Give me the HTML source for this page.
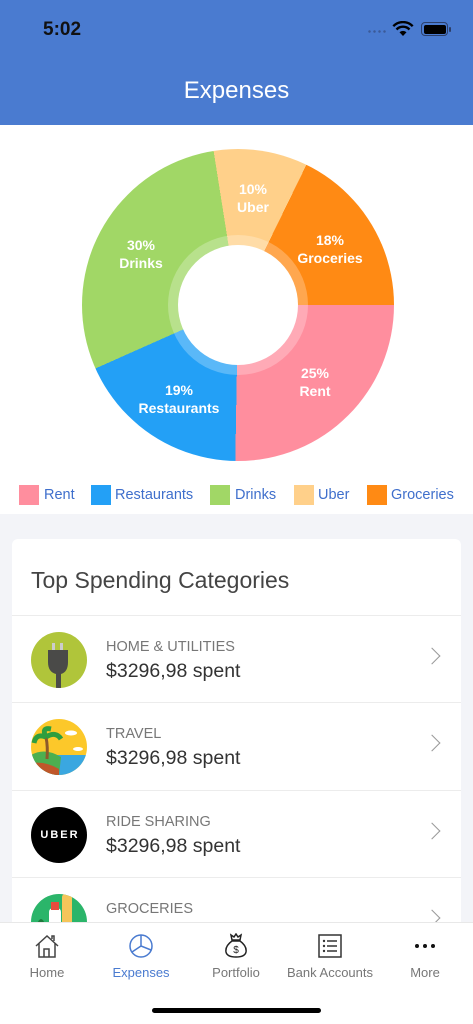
<!DOCTYPE html>
<html><head><meta charset="utf-8"><style>
*{margin:0;padding:0;box-sizing:border-box}
body{width:473px;height:1024px;overflow:hidden;background:#f3f4f8;font-family:"Liberation Sans",sans-serif;position:relative}
.hdr{position:absolute;left:0;top:0;width:473px;height:125px;background:#4a7bd0;box-shadow:0 1px 3px rgba(0,0,0,.2)}
.time{position:absolute;left:43px;top:19px;font-size:19px;font-weight:bold;color:#111}
.title{position:absolute;top:77px;width:100%;text-align:center;color:#fff;font-size:24px}
.chart{position:absolute;top:125px;left:0;width:473px;height:389px;background:#fff}
.pie{position:absolute;left:82px;top:24px;width:312px;height:312px;border-radius:50%;
background:conic-gradient(#ffd08a 0 26deg,#ff8a14 26deg 90deg,#ff8e9e 90deg 181deg,#23a0f6 181deg 246deg,#a1d766 246deg 351deg,#ffd08a 351deg 360deg)}
.ring{position:absolute;left:86px;top:86px;width:140px;height:140px;border-radius:50%;background:rgba(255,255,255,.25)}
.hole{position:absolute;left:96px;top:96px;width:120px;height:120px;border-radius:50%;background:#fff}
.lbl{position:absolute;color:#fff;font-size:14px;font-weight:bold;text-align:center;line-height:18px;transform:translateX(-50%);white-space:nowrap}
.legend{position:absolute;top:360px;left:0;width:100%;font-size:14.5px;color:#3f6fcc}
.legend span{position:absolute;top:0;line-height:20px}
.legend i{position:absolute;top:0;width:20px;height:20px}
.card{position:absolute;left:12px;top:539px;width:449px;height:400px;background:#fff;border-radius:6px}
.ct{position:absolute;left:19px;top:28px;font-size:23px;color:#444}
.row{position:absolute;left:0;width:449px;height:87px;border-top:1px solid #ececec}
.ic{position:absolute;left:19px;top:16px;width:56px;height:56px;border-radius:50%;overflow:hidden}
.cat{position:absolute;left:94px;top:23px;font-size:14.5px;color:#777}
.amt{position:absolute;left:94px;top:44px;font-size:19.5px;color:#333}
.chev{position:absolute;left:414px;top:34px;width:12px;height:12px;border-right:1.5px solid #999;border-top:1.5px solid #999;transform:rotate(45deg)}
.tab{position:absolute;left:0;top:922px;width:473px;height:102px;background:#fff;border-top:1px solid #e8e8e8}
.t{position:absolute;top:42px;font-size:13px;color:#777;transform:translateX(-50%);white-space:nowrap}
.ti{position:absolute;top:10px;transform:translateX(-50%)}
.home{position:absolute;left:152px;top:1008px;width:169px;height:5px;border-radius:3px;background:#000}
</style></head><body>
<div class="hdr">
<div class="time">5:02</div>
<div style="position:absolute;left:367px;top:30px;width:20px;height:3px;background-image:radial-gradient(circle,#3b5a98 1px,transparent 1.5px);background-size:5px 3px"></div>
<svg style="position:absolute;left:392px;top:21px" width="22" height="16" viewBox="0 0 22 16"><path d="M11 15 L7.5 11.3 A5 5 0 0 1 14.5 11.3Z" fill="#000"/><path d="M4.5 8.5 A9 9 0 0 1 17.5 8.5" stroke="#000" stroke-width="2.4" fill="none"/><path d="M1.3 5.2 A13.5 13.5 0 0 1 20.7 5.2" stroke="#000" stroke-width="2.4" fill="none"/></svg>
<div style="position:absolute;left:421px;top:22px;width:27px;height:14px;border:1.5px solid #2c3f6a;border-radius:4px;padding:1.5px"><div style="width:100%;height:100%;background:#000;border-radius:2px"></div></div>
<div style="position:absolute;left:449px;top:27px;width:2px;height:5px;background:#2c3f6a;border-radius:1px"></div>
<div class="title">Expenses</div>
</div>
<div class="chart">
<div class="pie"><div class="ring"></div><div class="hole"></div></div>
<div class="lbl" style="left:253px;top:55px">10%<br>Uber</div>
<div class="lbl" style="left:330px;top:106px">18%<br>Groceries</div>
<div class="lbl" style="left:141px;top:111px">30%<br>Drinks</div>
<div class="lbl" style="left:315px;top:239px">25%<br>Rent</div>
<div class="lbl" style="left:179px;top:256px">19%<br>Restaurants</div>
<div class="legend">
<i style="left:19px;background:#ff8e9e"></i><span style="left:44px">Rent</span>
<i style="left:91px;background:#23a0f6"></i><span style="left:115px">Restaurants</span>
<i style="left:210px;background:#a1d766"></i><span style="left:235px">Drinks</span>
<i style="left:294px;background:#ffd08a"></i><span style="left:318px">Uber</span>
<i style="left:367px;background:#ff8a14"></i><span style="left:391px">Groceries</span>
</div>
</div>
<div class="card">
<div class="ct">Top Spending Categories</div>
<div class="row" style="top:76px">
<div class="ic" style="background:#b0c53a"><svg width="56" height="56" viewBox="0 0 56 56"><rect x="21" y="11" width="3" height="7" fill="#ccc"/><rect x="29" y="11" width="3" height="7" fill="#ccc"/><path d="M17 18 H37 V30 Q37 40 30 42 V56 H25 V42 Q17 40 17 30Z" fill="#4a4a48"/></svg></div>
<div class="cat">HOME &amp; UTILITIES</div><div class="amt">$3296,98 spent</div><div class="chev"></div></div>
<div class="row" style="top:163px">
<div class="ic" style="background:#fcc82a"><svg width="56" height="56" viewBox="0 0 56 56"><rect y="36" width="56" height="20" fill="#3aa7e0"/><path d="M0 36 Q14 28 30 38 L28 56 H0Z" fill="#4caf50"/><path d="M0 44 Q15 42 28 50 L28 56 H0Z" fill="#c0572a"/><path d="M16 40 Q17 28 15 18" stroke="#8d5a2b" stroke-width="3" fill="none"/><path d="M15 18 Q5 14 3 24 M15 18 Q25 12 30 20 M15 18 Q10 8 20 10" stroke="#2e9e3e" stroke-width="5" fill="none"/><ellipse cx="40" cy="14" rx="6" ry="2.5" fill="#fff"/><ellipse cx="47" cy="30" rx="5" ry="2" fill="#fff"/></svg></div>
<div class="cat">TRAVEL</div><div class="amt">$3296,98 spent</div><div class="chev"></div></div>
<div class="row" style="top:251px">
<div class="ic" style="background:#000;color:#fff;font-size:11px;font-weight:bold;letter-spacing:2px;text-align:center;line-height:56px;padding-left:2px">UBER</div>
<div class="cat">RIDE SHARING</div><div class="amt">$3296,98 spent</div><div class="chev"></div></div>
<div class="row" style="top:338px">
<div class="ic" style="background:#2bb56a"><svg width="56" height="56" viewBox="0 0 56 56"><rect x="31" y="0" width="10" height="40" rx="3" fill="#f5c55a"/><rect x="18" y="14" width="12" height="26" rx="4" fill="#fff"/><rect x="20" y="8" width="8" height="8" fill="#e84c3d"/><path d="M6 30 Q10 20 14 30 V40 H6Z" fill="#1d7a3b"/><rect x="0" y="38" width="56" height="4" fill="#f3a53a"/></svg></div>
<div class="cat">GROCERIES</div><div class="chev"></div></div>
</div>
<div class="tab">
<svg class="ti" style="left:47px" width="26" height="26" viewBox="0 0 26 26"><path d="M2 13 L13 3 L24 13 M5 10 V24 H21 V10 M10 24 V16 H15 V24 M18 6 V3 H20 V8" stroke="#444" stroke-width="1.5" fill="none"/></svg>
<svg class="ti" style="left:141px" width="26" height="26" viewBox="0 0 26 26"><circle cx="13" cy="13" r="11" stroke="#4a7bd0" stroke-width="1.5" fill="none"/><path d="M13 2 V13 L23 17 M13 13 L4 19" stroke="#4a7bd0" stroke-width="1.5" fill="none"/></svg>
<svg class="ti" style="left:236px" width="26" height="26" viewBox="0 0 26 26"><path d="M9 7 L8 2 L11 4 L13 1 L15 4 L18 2 L17 7Z M9 8 Q2 13 3 19 Q4 24 13 24 Q22 24 23 19 Q24 13 17 8Z" stroke="#222" stroke-width="1.5" fill="none"/><text x="13" y="20" font-size="10" text-anchor="middle" fill="#222" font-family="Liberation Sans">$</text></svg>
<svg class="ti" style="left:330px" width="26" height="26" viewBox="0 0 26 26"><rect x="2" y="2" width="22" height="22" stroke="#333" stroke-width="1.5" fill="none"/><circle cx="7" cy="8" r="1.2" fill="#333"/><circle cx="7" cy="13" r="1.2" fill="#333"/><circle cx="7" cy="18" r="1.2" fill="#333"/><path d="M10 8 H20 M10 13 H20 M10 18 H20" stroke="#333" stroke-width="1.5"/></svg>
<svg class="ti" style="left:425px" width="26" height="26" viewBox="0 0 26 26"><circle cx="5" cy="13" r="2" fill="#111"/><circle cx="13" cy="13" r="2" fill="#111"/><circle cx="21" cy="13" r="2" fill="#111"/></svg>
<div class="t" style="left:47px">Home</div>
<div class="t" style="left:141px;color:#4a7bd0">Expenses</div>
<div class="t" style="left:236px">Portfolio</div>
<div class="t" style="left:330px">Bank Accounts</div>
<div class="t" style="left:425px">More</div>
</div>
<div class="home"></div>
</body></html>
